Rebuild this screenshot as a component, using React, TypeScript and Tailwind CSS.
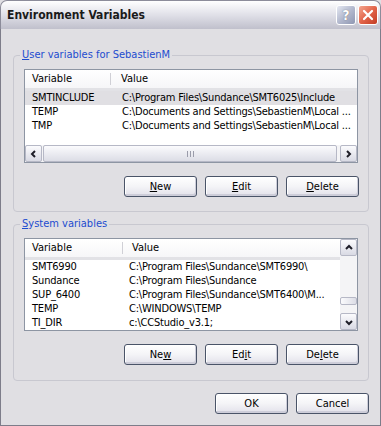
import React from "react";

const F = "font-['DejaVu_Sans_Condensed','Liberation_Sans',sans-serif]";

function XPButton({ children }: { children: React.ReactNode }) {
  return (
    <div className="h-[21px] w-[73px] rounded-[3px] border border-[#4a5468] bg-gradient-to-b from-[#ffffff] via-[#f4f4f7] to-[#e2e1ea] shadow-[inset_-1px_-2px_0_#cdcdd9,inset_1px_1px_0_#ffffff] flex items-center justify-center text-[11px] leading-none text-black">
      {children}
    </div>
  );
}

function Arrow({ dir }: { dir: "left" | "right" | "up" | "down" }) {
  const paths: Record<string, string> = {
    left: "M6 2 L3 5 L6 8",
    right: "M3 2 L6 5 L3 8",
    up: "M2 6 L5 3 L8 6",
    down: "M2 4 L5 7 L8 4",
  };
  return (
    <svg width="9" height="10" viewBox="0 0 9 10">
      <path d={paths[dir]} fill="none" stroke="#1e1e28" strokeWidth="2" />
    </svg>
  );
}

function SBtn({ dir }: { dir: "left" | "right" | "up" | "down" }) {
  return (
    <div className="w-[17px] h-[17px] shrink-0 rounded-[2px] border border-[#b6b8c6] bg-gradient-to-b from-[#fbfbfd] to-[#d9dae4] flex items-center justify-center">
      <Arrow dir={dir} />
    </div>
  );
}

function Header({ w1, pl2 }: { w1: string; pl2: string }) {
  return (
    <div className="h-[21px] flex text-[11px] text-black bg-gradient-to-b from-[#ffffff] to-[#f6f6f8] border-b-[3px] border-[#e2e2e6] shrink-0">
      <div className={`${w1} pl-[7px] flex items-center border-r border-[#d0d0d6] my-[3px]`}>Variable</div>
      <div className={`${pl2} flex items-center`}>Value</div>
    </div>
  );
}

function Row({ a, b, w1, sel }: { a: string; b: string; w1: string; sel?: boolean }) {
  return (
    <div className={`h-[14px] flex items-center text-[11px] leading-[14px] tracking-[-0.2px] text-black whitespace-nowrap ${sel ? "bg-[#e0dfe3]" : ""}`}>
      <div className={`${w1} pl-[7px] shrink-0`}>{a}</div>
      <div className="pl-[7px]">{b}</div>
    </div>
  );
}

function GroupBox({ label, children }: { label: React.ReactNode; children: React.ReactNode }) {
  return (
    <div className="relative w-[356px] h-[157px] border border-[#c8c8d0] rounded-[4px] pl-[10px] pr-[9px] pt-[13px]">
      <div className="absolute left-[6px] top-[-8px] px-[2px] bg-[#e0dfe3] text-[11px] leading-[14px] text-[#1d4ccf]">
        {label}
      </div>
      {children}
    </div>
  );
}

function TitleBar() {
  return (
    <div className="h-[29px] shrink-0 rounded-t-[7px] border border-b-0 border-[#8c8c9a] bg-gradient-to-b from-[#ffffff] via-[#e0e0e8] to-[#c0c0cc] flex items-center pl-[6px] pr-[2px] relative">
      <div className="text-[12px] font-bold text-[#1a1a1a]">Environment Variables</div>
      <div className="ml-auto flex gap-[2px] items-center">
        <div className="w-[20px] h-[20px] rounded-[3px] border border-white bg-gradient-to-br from-[#e5e8f2] via-[#b3b9ce] to-[#8f97b2] flex items-center justify-center text-white font-bold text-[14px] leading-none [text-shadow:0_0_1px_#555]">
          ?
        </div>
        <div className="w-[20px] h-[20px] rounded-[3px] border border-white bg-gradient-to-br from-[#f3a58f] via-[#e2644a] to-[#c23b23] flex items-center justify-center">
          <svg width="12" height="12" viewBox="0 0 12 12">
            <path d="M2 2 L10 10 M10 2 L2 10" stroke="white" strokeWidth="2.2" strokeLinecap="round" />
          </svg>
        </div>
      </div>
    </div>
  );
}

export default function App() {
  return (
    <div className={`w-[381px] h-[426px] flex flex-col ${F} bg-[#e0dfe3]`}>
      <TitleBar />
      <div className="flex-1 border-x border-b border-[#7d7d8a] pl-[12px] pr-[11px] pt-[26px] flex flex-col">
        <GroupBox label={<span><u>U</u>ser variables for SebastienM</span>}>
          <div className="w-[334px] h-[94px] border border-[#8d95a3] bg-white flex flex-col">
            <Header w1="w-[86px]" pl2="pl-[10px]" />
            <Row a="SMTINCLUDE" b="C:\Program Files\Sundance\SMT6025\Include" w1="w-[90px]" sel />
            <Row a="TEMP" b="C:\Documents and Settings\SebastienM\Local ..." w1="w-[90px]" />
            <Row a="TMP" b="C:\Documents and Settings\SebastienM\Local ..." w1="w-[90px]" />
            <div className="mt-auto h-[17px] flex bg-[#f4f4f6]">
              <SBtn dir="left" />
              <div className="flex-1 flex pl-[1px] pr-[3px]">
                <div className="flex-1 rounded-[2px] border border-[#b6b8c6] bg-gradient-to-b from-[#fbfbfd] to-[#dcdde6] flex items-center justify-center gap-[1px]">
                  <div className="w-[1px] h-[6px] bg-[#9a9caa]" />
                  <div className="w-[1px] h-[6px] bg-[#9a9caa] ml-[1px]" />
                  <div className="w-[1px] h-[6px] bg-[#9a9caa] ml-[1px]" />
                </div>
              </div>
              <SBtn dir="right" />
            </div>
          </div>
          <div className="mt-[13px] flex justify-end gap-[8px]">
            <XPButton><span><u>N</u>ew</span></XPButton>
            <XPButton><span><u>E</u>dit</span></XPButton>
            <XPButton><span><u>D</u>elete</span></XPButton>
          </div>
        </GroupBox>
        <div className="mt-[12px]">
          <GroupBox label={<span><u>S</u>ystem variables</span>}>
            <div className="w-[334px] h-[93px] border border-[#8d95a3] bg-white flex">
              <div className="flex-1 flex flex-col overflow-hidden">
                <Header w1="w-[98px]" pl2="pl-[9px]" />
                <Row a="SMT6990" b="C:\Program Files\Sundance\SMT6990\" w1="w-[97px]" />
                <Row a="Sundance" b="C:\Program Files\Sundance" w1="w-[97px]" />
                <Row a="SUP_6400" b="C:\Program Files\Sundance\SMT6400\M..." w1="w-[97px]" />
                <Row a="TEMP" b="C:\WINDOWS\TEMP" w1="w-[97px]" />
                <Row a="TI_DIR" b="c:\CCStudio_v3.1;" w1="w-[97px]" />
              </div>
              <div className="w-[17px] flex flex-col bg-[#f4f4f6]">
                <SBtn dir="up" />
                <div className="flex-1 flex flex-col justify-end pb-[8px]">
                  <div className="h-[8px] rounded-[2px] border border-[#b6b8c6] bg-gradient-to-r from-[#fbfbfd] to-[#dcdde6]" />
                </div>
                <SBtn dir="down" />
              </div>
            </div>
            <div className="mt-[13px] flex justify-end gap-[8px]">
              <XPButton><span>Ne<u>w</u></span></XPButton>
              <XPButton><span>Ed<u>i</u>t</span></XPButton>
              <XPButton><span>De<u>l</u>ete</span></XPButton>
            </div>
          </GroupBox>
        </div>
        <div className="mt-[12px] flex justify-end gap-[8px]">
          <XPButton>OK</XPButton>
          <XPButton>Cancel</XPButton>
        </div>
      </div>
    </div>
  );
}
